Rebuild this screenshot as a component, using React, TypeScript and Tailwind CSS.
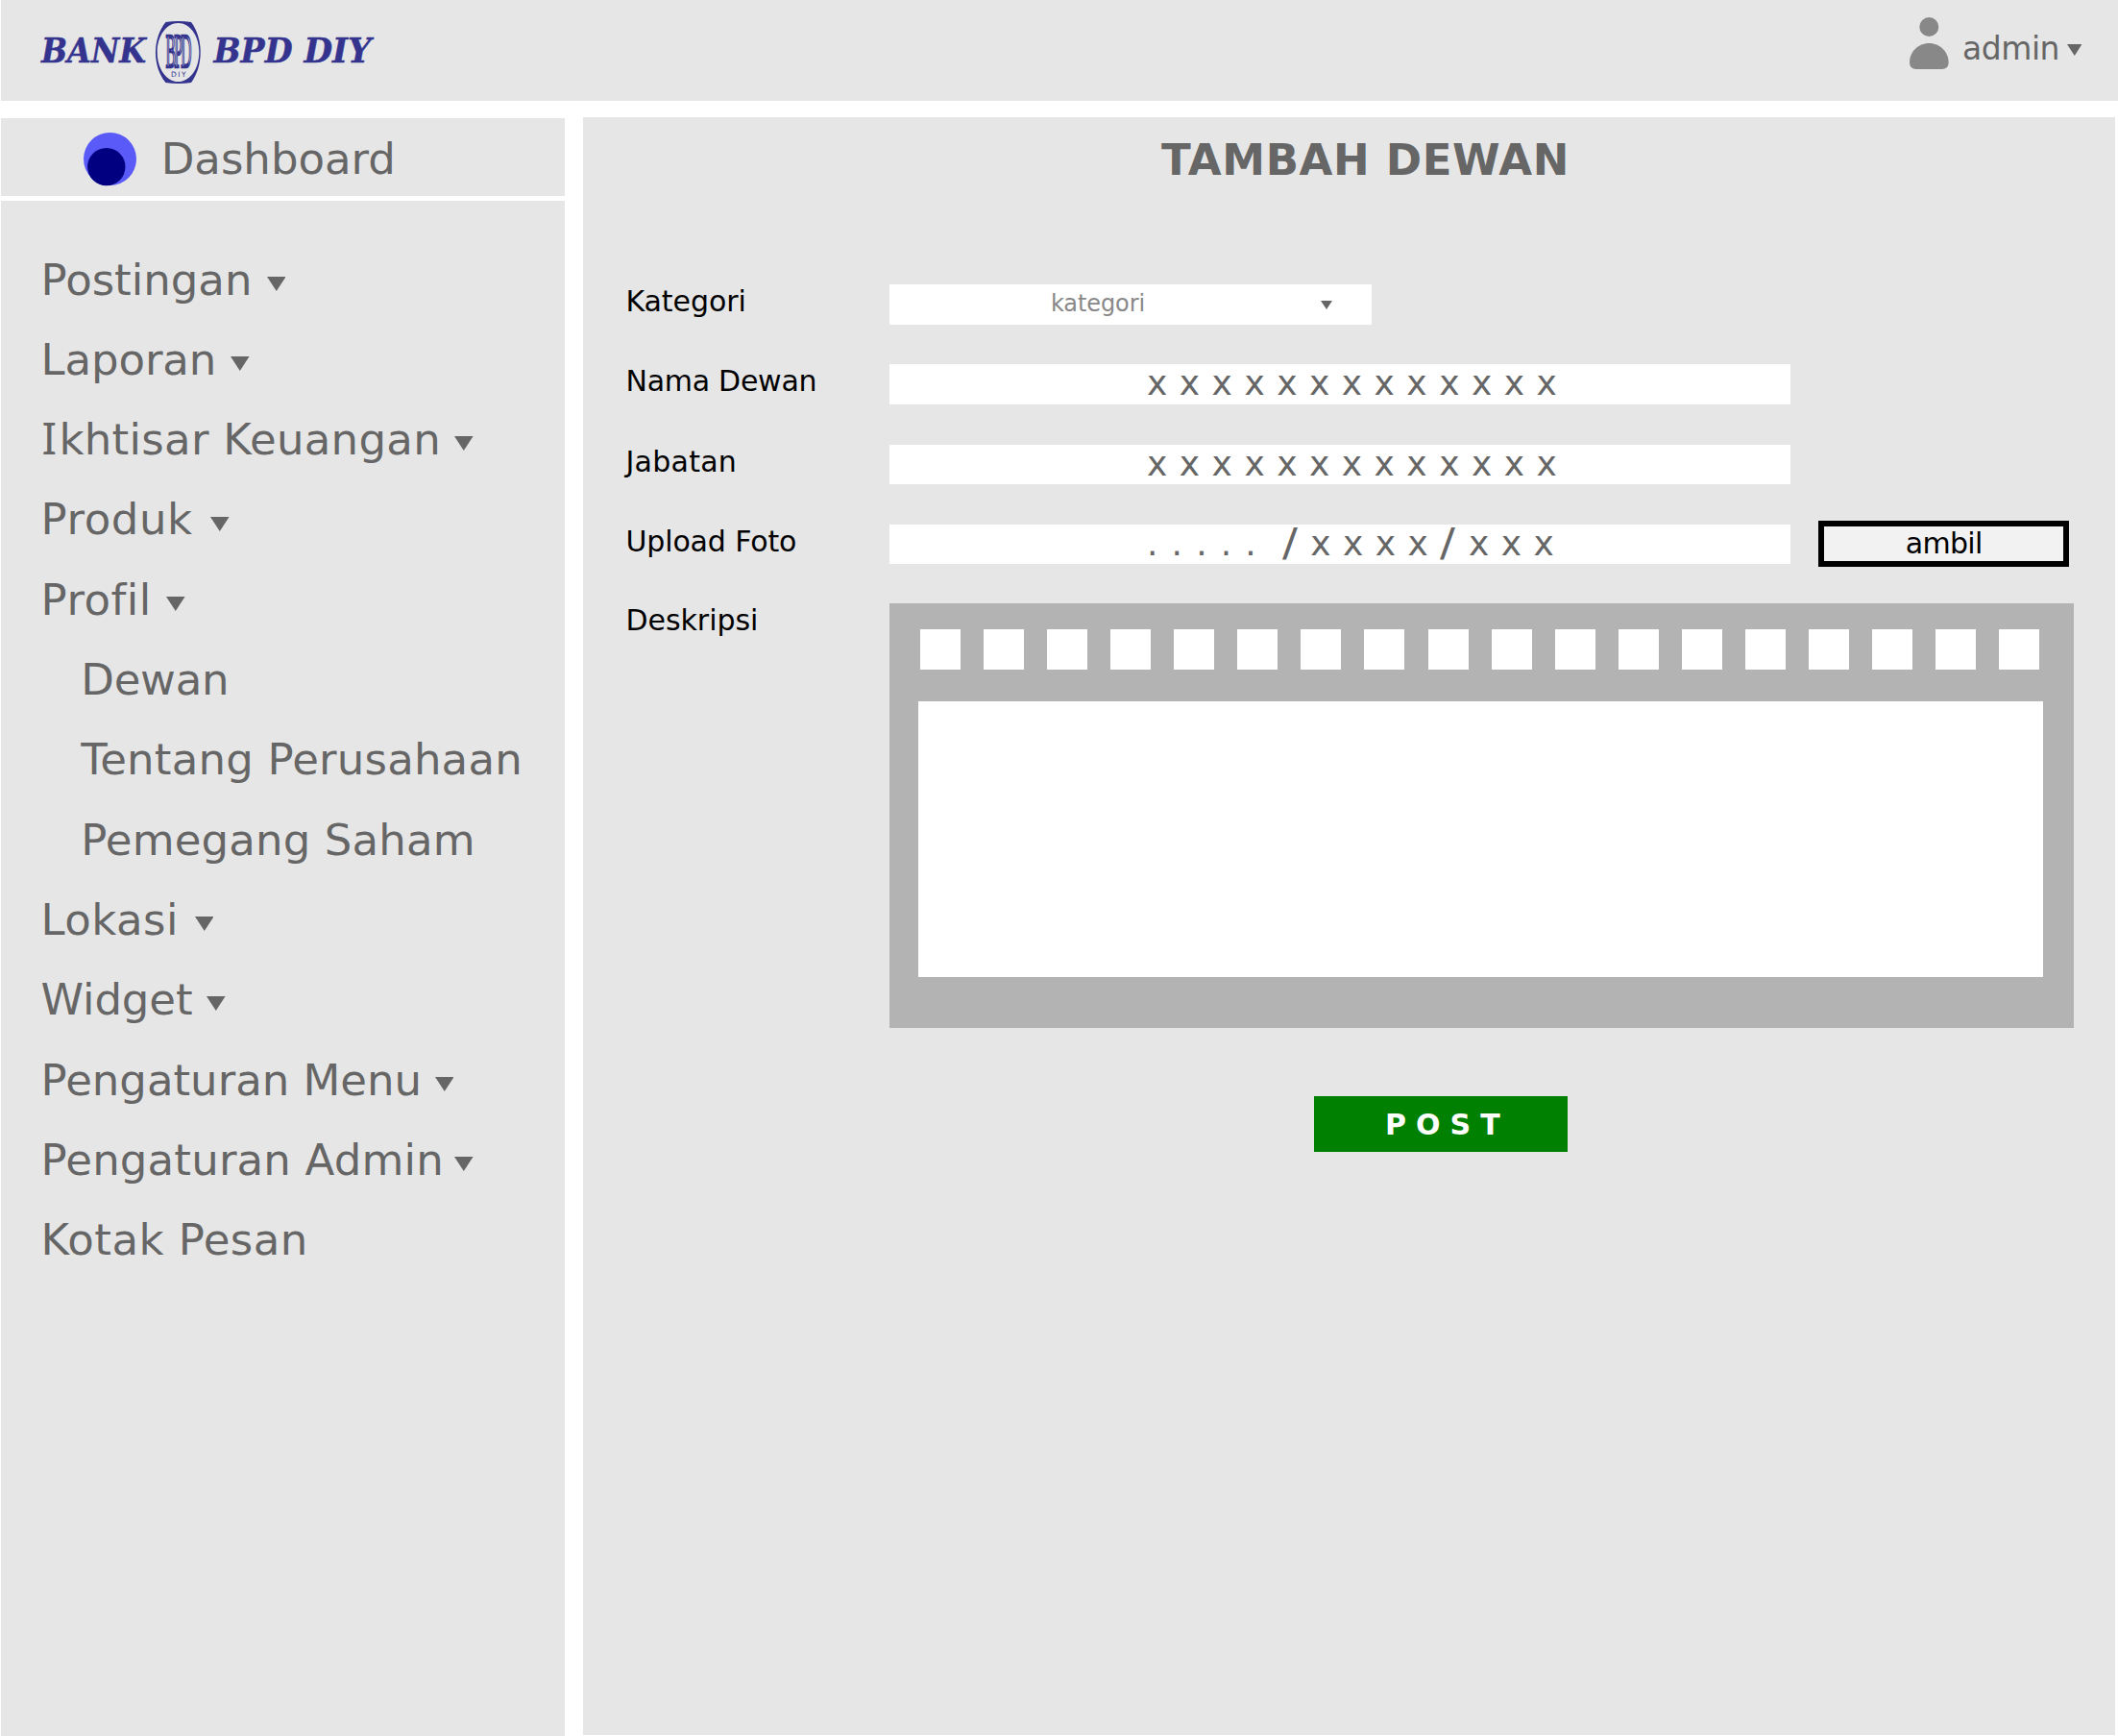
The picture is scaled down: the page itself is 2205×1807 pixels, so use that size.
import { ReactNode } from 'react';

type Item = { label: ReactNode; track: string; gap?: string; sub?: boolean };

const menu: Item[] = [
  { label: 'Postingan', track: 'tracking-[0px]', gap: 'ml-[15.4px]' },
  { label: 'Laporan', track: 'tracking-[-0.1px]', gap: 'ml-[15px]' },
  {
    label: (
      <>
        <span className="inline-block w-[18.8px] pl-[1px] font-['Noto_Sans',sans-serif] text-[46px] leading-[60px]">I</span>
        khtisar Keuangan
      </>
    ),
    track: 'tracking-[0.3px]',
    gap: 'ml-[14.4px]',
  },
  { label: 'Produk', track: 'tracking-[0.6px]', gap: 'ml-[18.5px]' },
  { label: 'Profil', track: 'tracking-[0.5px]', gap: 'ml-[15.4px]' },
  { label: 'Dewan', track: 'tracking-[-0.2px]', sub: true },
  { label: 'Tentang Perusahaan', track: 'tracking-[0.2px]', sub: true },
  { label: 'Pemegang Saham', track: 'tracking-[0.15px]', sub: true },
  { label: 'Lokasi', track: 'tracking-[0.45px]', gap: 'ml-[16.9px]' },
  { label: 'Widget', track: 'tracking-[-0.1px]', gap: 'ml-[14.7px]' },
  { label: 'Pengaturan Menu', track: 'tracking-[0px]', gap: 'ml-[13.5px]' },
  { label: 'Pengaturan Admin', track: 'tracking-[0.18px]', gap: 'ml-[11.6px]' },
  { label: 'Kotak Pesan', track: 'tracking-[0.45px]' },
];

function Caret({ className }: { className: string }) {
  return (
    <svg viewBox="0 0 20 15" preserveAspectRatio="none" className={`shrink-0 fill-[#666666] ${className}`}>
      <path d="M0 0H20L10 15Z" />
    </svg>
  );
}

function Logo() {
  return (
    <svg viewBox="0 0 360 70" className="ml-[39px] mt-[20px] h-[70px] w-[360px] fill-[#34348f]">
      <g
        fontFamily="'DejaVu Serif', serif"
        fontWeight="bold"
        fontStyle="italic"
        fontSize="34.7"
        stroke="#34348f"
        strokeWidth="0.5"
      >
        <text x="3" y="45.3" textLength="109" lengthAdjust="spacingAndGlyphs">BANK</text>
        <text x="182.500" y="45.3" textLength="82" lengthAdjust="spacingAndGlyphs">BPD</text>
        <text x="276.500" y="45.3" textLength="70" lengthAdjust="spacingAndGlyphs">DIY</text>
      </g>
      <path
        fillRule="evenodd"
        d="M132.500 3Q145.500 1 159 3C172 20 172 49 159 66Q145.500 68 132.500 66C118.500 49 118.500 20 132.500 3ZM145.500 4C133.500 4 123.700 17 123.700 34.400S133.500 65 145.500 65S167.300 52 167.300 34.400S157.500 4 145.500 4Z"
      />
      <text
        transform="translate(132.500 49.500) scale(0.31 1)"
        fontFamily="'Liberation Serif', serif"
        fontSize="50"
        letterSpacing="-5"
        fill="none"
        stroke="#34348f"
        strokeWidth="2.6"
      >
        BPD
      </text>
      <text x="138" y="59.500" fontFamily="'DejaVu Sans', sans-serif" fontSize="7.500" textLength="15.500">DIY</text>
    </svg>
  );
}

function Field({ label, track, children }: { label: string; track: string; children: ReactNode }) {
  return (
    <div className="flex h-[83.3px] items-start">
      <label className={`-ml-[0.5px] w-[274.5px] shrink-0 text-[30px] leading-[35px] text-black ${track}`}>{label}</label>
      {children}
    </div>
  );
}

function Cells({ text }: { text: string }) {
  return (
    <div className="flex h-[41.5px] w-[937.6px] bg-white pl-[268px] text-[36px] leading-[39px] text-[#666666]">
      {text.split('').map((c, i) => (
        <span
          key={i}
          className={
            c === 'x'
              ? 'w-[33.8px]'
              : c === '.'
                ? 'w-[25.6px]'
                : c === '/'
                  ? 'w-[29.6px] origin-left scale-x-115 text-[41px]'
                  : 'w-[12.6px]'
          }
        >
          {c}
        </span>
      ))}
    </div>
  );
}

export default function App() {
  return (
    <div className="flex h-[1807px] w-[2205px] flex-col overflow-hidden bg-white pl-px font-['DejaVu_Sans',sans-serif] text-[#666666]">
      <header className="flex h-[105px] shrink-0 justify-between bg-[#e6e6e6]">
        <Logo />
        <div className="flex items-start pr-[37.8px]">
          <svg viewBox="0 0 41 55" className="mt-[18px] h-[55px] w-[41px] fill-[#888888]">
            <circle cx="20.300" cy="10" r="10" />
            <path d="M0 47C0 36 9 27 20.300 27S40.600 36 40.600 47Q40.600 54 33.500 54H7Q0 54 0 47Z" />
          </svg>
          <span className="ml-[14.6px] mt-[31px] text-[33px] leading-[40px] tracking-[-0.5px]">admin</span>
          <Caret className="ml-[7.7px] mt-[46px] h-[12px] w-[15.5px]" />
        </div>
      </header>

      <div className="flex min-h-0 flex-1">
        <aside className="mr-[18.8px] flex w-[587px] shrink-0 flex-col pt-[18px]">
          <div className="flex h-[80.6px] shrink-0 items-start bg-[#e6e6e6] pl-[86px]">
            <svg viewBox="0 0 55 56" className="mt-[15px] h-[56px] w-[55px]">
              <circle cx="27.500" cy="27.500" r="27.500" fill="#5a5af8" />
              <circle cx="23.800" cy="35.600" r="19.700" fill="#000080" />
            </svg>
            <span className="ml-[25.7px] mt-[13px] text-[45px] leading-[60px]">Dashboard</span>
          </div>
          <nav className="mt-[5.8px] flex-1 bg-[#e6e6e6] pt-[40px]">
            {menu.map((m, i) => (
              <div
                key={i}
                className={`flex h-[83.3px] items-center text-[45px] leading-[83px] ${m.sub ? 'pl-[83.2px]' : 'pl-[41.6px]'}`}
              >
                <span className={`whitespace-nowrap ${m.track}`}>{m.label}</span>
                {m.gap && <Caret className={`mt-[8.5px] h-[15px] w-[19.6px] ${m.gap}`} />}
              </div>
            ))}
          </nav>
        </aside>

        <main className="mt-[17px] h-[1683.5px] w-[1594.8px] bg-[#e6e6e6] pl-[45.2px] pt-[24px]">
          <h1 className="ml-[557px] h-[150px] text-[45px] font-bold leading-[42px] tracking-[0.63px]">TAMBAH DEWAN</h1>
          <Field label="Kategori" track="tracking-[-0.07px]">
            <div className="flex h-[41.5px] w-[502px] bg-white">
              <span className="ml-[168px] w-[281px] text-[24px] leading-[41px] tracking-[-0.1px] text-[#888888]">kategori</span>
              <Caret className="mt-[17px] h-[9px] w-[12px]" />
            </div>
          </Field>
          <Field label="Nama Dewan" track="tracking-[-0.27px]">
            <Cells text="xxxxxxxxxxxxx" />
          </Field>
          <Field label="Jabatan" track="tracking-[0.25px]">
            <Cells text="xxxxxxxxxxxxx" />
          </Field>
          <Field label="Upload Foto" track="tracking-[-0.14px]">
            <Cells text="..... /xxxx/xxx" />
            <button className="-mt-[4px] ml-[29.6px] h-[48px] w-[261px] border-[6px] border-black bg-[#f2f2f2] text-[30px] leading-[36px] tracking-[-0.7px] text-black">
              ambil
            </button>
          </Field>
          <div className="flex items-start">
            <label className="-ml-[0.5px] w-[274.5px] shrink-0 text-[30px] leading-[34px] tracking-[-0.05px] text-black">
              Deskripsi
            </label>
            <div className="-mt-[0.8px] h-[442px] w-[1233.5px] bg-[#b3b3b3] pl-[30px] pt-[27px]">
              <div className="flex gap-[24.1px] pl-[1.8px]">
                {Array.from({ length: 18 }, (_, i) => (
                  <span key={i} className="h-[41.5px] w-[42px] bg-white" />
                ))}
              </div>
              <div className="mt-[33.5px] h-[287px] w-[1171px] bg-white" />
            </div>
          </div>
          <button className="ml-[716px] mt-[71px] block h-[58px] w-[264.4px] bg-[#008000] pl-[3px] text-[30px] font-bold leading-[60px] tracking-[-0.2px] text-white">
            P O S T
          </button>
        </main>
      </div>
    </div>
  );
}
